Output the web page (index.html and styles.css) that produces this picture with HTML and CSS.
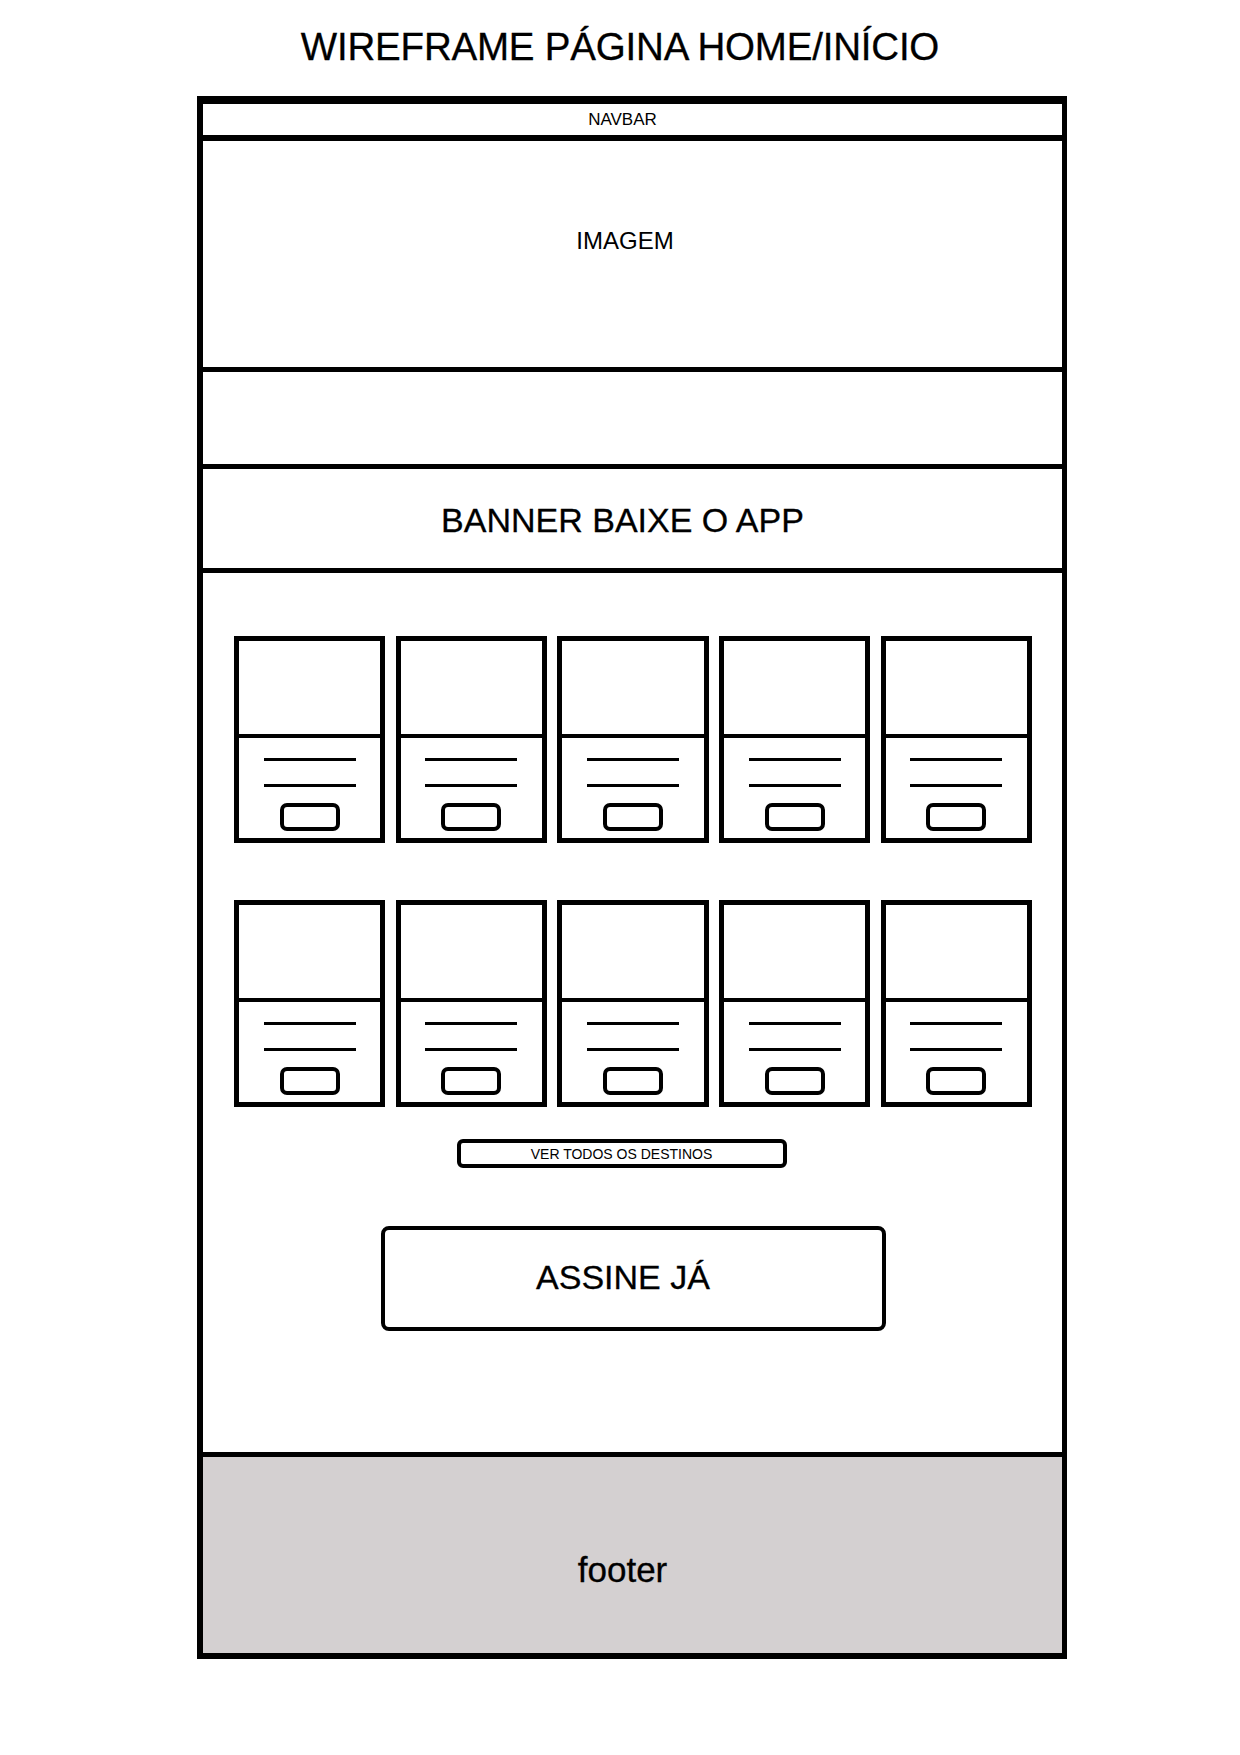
FILE: index.html
```html
<!DOCTYPE html>
<html lang="pt-BR">
<head>
    <meta charset="UTF-8">
    <meta name="viewport" content="width=device-width, initial-scale=1.0">
    <title>Wireframe Página Home/Início</title>
    <link rel="stylesheet" href="styles.css">
</head>
<body>
    <h1 class="title">WIREFRAME PÁGINA HOME/INÍCIO</h1>
    <div class="frame">
        <nav class="navbar">NAVBAR</nav>
        <section class="hero">IMAGEM</section>
        <section class="blank"></section>
        <section class="banner">BANNER BAIXE O APP</section>
        <main class="content">
            <div class="cards">
                <div class="card"><div class="card-img"></div><div class="card-body"><span class="line"></span><span class="line"></span><span class="card-btn"></span></div></div>
                <div class="card"><div class="card-img"></div><div class="card-body"><span class="line"></span><span class="line"></span><span class="card-btn"></span></div></div>
                <div class="card"><div class="card-img"></div><div class="card-body"><span class="line"></span><span class="line"></span><span class="card-btn"></span></div></div>
                <div class="card"><div class="card-img"></div><div class="card-body"><span class="line"></span><span class="line"></span><span class="card-btn"></span></div></div>
                <div class="card"><div class="card-img"></div><div class="card-body"><span class="line"></span><span class="line"></span><span class="card-btn"></span></div></div>
                <div class="card"><div class="card-img"></div><div class="card-body"><span class="line"></span><span class="line"></span><span class="card-btn"></span></div></div>
                <div class="card"><div class="card-img"></div><div class="card-body"><span class="line"></span><span class="line"></span><span class="card-btn"></span></div></div>
                <div class="card"><div class="card-img"></div><div class="card-body"><span class="line"></span><span class="line"></span><span class="card-btn"></span></div></div>
                <div class="card"><div class="card-img"></div><div class="card-body"><span class="line"></span><span class="line"></span><span class="card-btn"></span></div></div>
                <div class="card"><div class="card-img"></div><div class="card-body"><span class="line"></span><span class="line"></span><span class="card-btn"></span></div></div>
            </div>
            <a class="see-all" href="#">VER TODOS OS DESTINOS</a>
            <a class="subscribe" href="#">ASSINE JÁ</a>
        </main>
        <footer class="footer">footer</footer>
    </div>
</body>
</html>
```

FILE: styles.css
```css
body {
    margin: 0;
    background: #fff;
    color: #000;
    font-family: "Liberation Sans", Arial, sans-serif;
}
a {
    color: #000;
    text-decoration: none;
}
.title {
    margin: 25px 0 0 0;
    font-size: 38.5px;
    line-height: 44px;
    font-weight: normal;
    letter-spacing: -0.2px;
    text-align: center;
    -webkit-text-stroke: 0.3px #000;
}
.frame {
    box-sizing: border-box;
    width: 870px;
    margin: 27px 0 0 197px;
    border: 6px solid #000;
    border-top-width: 8px;
    border-right-width: 5px;
}
.navbar {
    box-sizing: border-box;
    height: 37px;
    padding-right: 20px;
    border-bottom: 6px solid #000;
    display: flex;
    justify-content: center;
    align-items: center;
    font-size: 17px;
}
.hero {
    box-sizing: border-box;
    height: 231px;
    padding: 86px 15px 0 0;
    border-bottom: 5px solid #000;
    text-align: center;
    font-size: 24px;
    line-height: 28px;
}
.blank {
    height: 92px;
    border-bottom: 5px solid #000;
}
.banner {
    box-sizing: border-box;
    height: 104px;
    padding: 4px 20px 0 0;
    border-bottom: 5px solid #000;
    display: flex;
    justify-content: center;
    align-items: center;
    font-size: 34px;
    -webkit-text-stroke: 0.3px #000;
}
.content {
    box-sizing: border-box;
    height: 884px;
    padding: 63px 30px 0 31px;
    border-bottom: 5px solid #000;
    display: flex;
    flex-direction: column;
    align-items: center;
}
.cards {
    width: 100%;
    display: grid;
    grid-template-columns: repeat(5, 1fr);
    column-gap: 10.5px;
    row-gap: 57px;
}
.card {
    height: 207px;
    box-sizing: border-box;
    border: 5px solid #000;
    display: flex;
    flex-direction: column;
}
.card-img {
    height: 93px;
    border-bottom: 4px solid #000;
}
.card-body {
    flex: 1;
    padding-top: 20px;
    display: flex;
    flex-direction: column;
    align-items: center;
}
.line {
    display: block;
    width: 92px;
    height: 3px;
    background: #000;
    margin-bottom: 23px;
}
.line + .line {
    margin-bottom: 16px;
}
.card-btn {
    display: block;
    box-sizing: border-box;
    width: 60px;
    height: 28px;
    border: 4px solid #000;
    border-radius: 7px;
}
.see-all {
    box-sizing: border-box;
    width: 330px;
    height: 29px;
    margin: 32px 23px 0 0;
    border: 4px solid #000;
    border-radius: 6px;
    display: flex;
    justify-content: center;
    align-items: center;
    font-size: 14px;
}
.subscribe {
    box-sizing: border-box;
    width: 505px;
    height: 105px;
    margin-top: 58px;
    padding: 0 20px 2px 0;
    border: 4px solid #000;
    border-radius: 8px;
    display: flex;
    justify-content: center;
    align-items: center;
    font-size: 34px;
    -webkit-text-stroke: 0.3px #000;
}
.footer {
    box-sizing: border-box;
    height: 196px;
    padding: 30px 20px 0 0;
    background: #d4d0d1;
    display: flex;
    justify-content: center;
    align-items: center;
    font-size: 35px;
    -webkit-text-stroke: 0.3px #000;
}
```
